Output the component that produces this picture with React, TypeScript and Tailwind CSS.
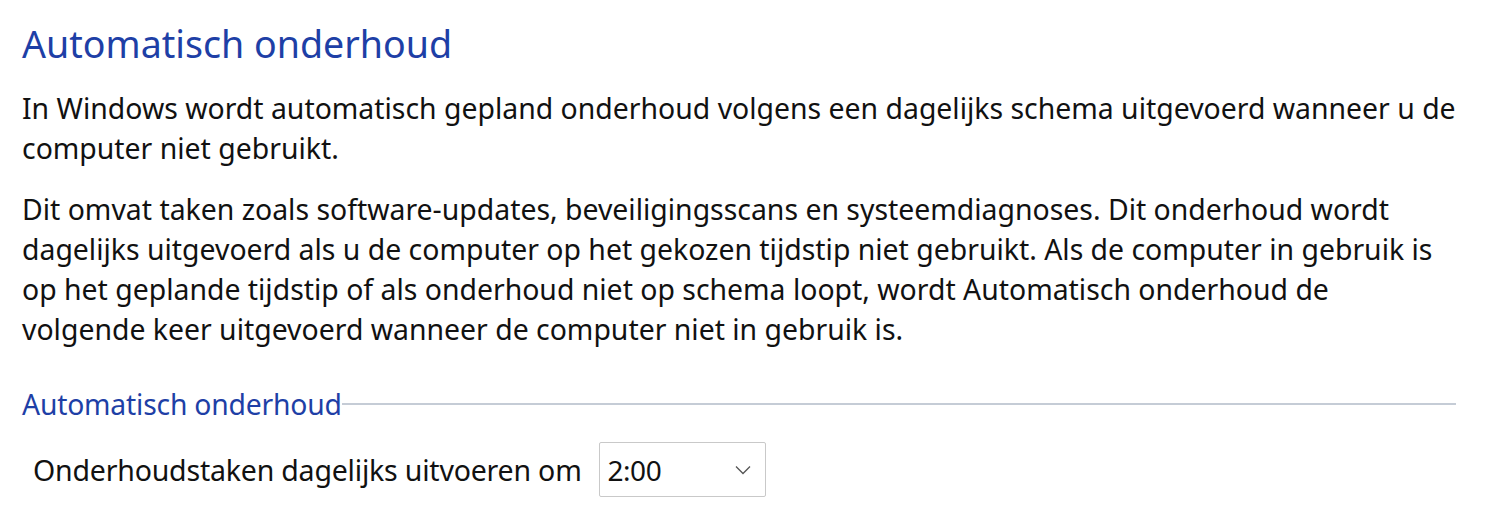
import React from "react";

const body = "font-['Noto_Sans','Open_Sans',sans-serif]";

function Lines({ lines }: { lines: string[] }) {
  return (
    <p className="text-[28.4px] leading-[40px] text-[#111]">
      {lines.map((l) => (
        <span key={l} className="block whitespace-nowrap">
          {l}
        </span>
      ))}
    </p>
  );
}

export default function App() {
  return (
    <div className={`w-[1500px] h-[507px] bg-white pl-[22px] pr-[44px] pt-[18px] ${body}`}>
      <h1 className="text-[37.6px] leading-[52px] text-[#1e3fa6] font-normal">
        Automatisch onderhoud
      </h1>

      <div className="mt-[18px]">
        <Lines
          lines={[
            "In Windows wordt automatisch gepland onderhoud volgens een dagelijks schema uitgevoerd wanneer u de",
            "computer niet gebruikt.",
          ]}
        />
      </div>

      <div className="mt-[21px]">
        <Lines
          lines={[
            "Dit omvat taken zoals software-updates, beveiligingsscans en systeemdiagnoses. Dit onderhoud wordt",
            "dagelijks uitgevoerd als u de computer op het gekozen tijdstip niet gebruikt. Als de computer in gebruik is",
            "op het geplande tijdstip of als onderhoud niet op schema loopt, wordt Automatisch onderhoud de",
            "volgende keer uitgevoerd wanneer de computer niet in gebruik is.",
          ]}
        />
      </div>

      <div className="mt-[38px] flex items-center w-[1434px]">
        <span className="text-[28.3px] leading-[34px] text-[#1e3fa6] whitespace-nowrap tracking-[-0.2px]">
          Automatisch onderhoud
        </span>
        <div className="flex-1 h-[2px] bg-[#c5ccd6]" />
      </div>

      <div className="mt-[21px] flex items-center pl-[11px]">
        <span className="text-[28.5px] leading-[34px] text-[#111] whitespace-nowrap tracking-[-0.2px]">
          Onderhoudstaken dagelijks uitvoeren om
        </span>
        <div className="ml-[17px] w-[167px] h-[55px] border border-[#c9c9c9] rounded-[2px] bg-white flex items-center justify-between pl-[8px] pr-[14px]">
          <span className="text-[28px] text-[#111] tracking-[-0.5px]">2:00</span>
          <svg width="16" height="10" viewBox="0 0 16 10" fill="none">
            <path d="M1 1.5 L8 8.5 L15 1.5" stroke="#555" strokeWidth="1.3" />
          </svg>
        </div>
      </div>
    </div>
  );
}
